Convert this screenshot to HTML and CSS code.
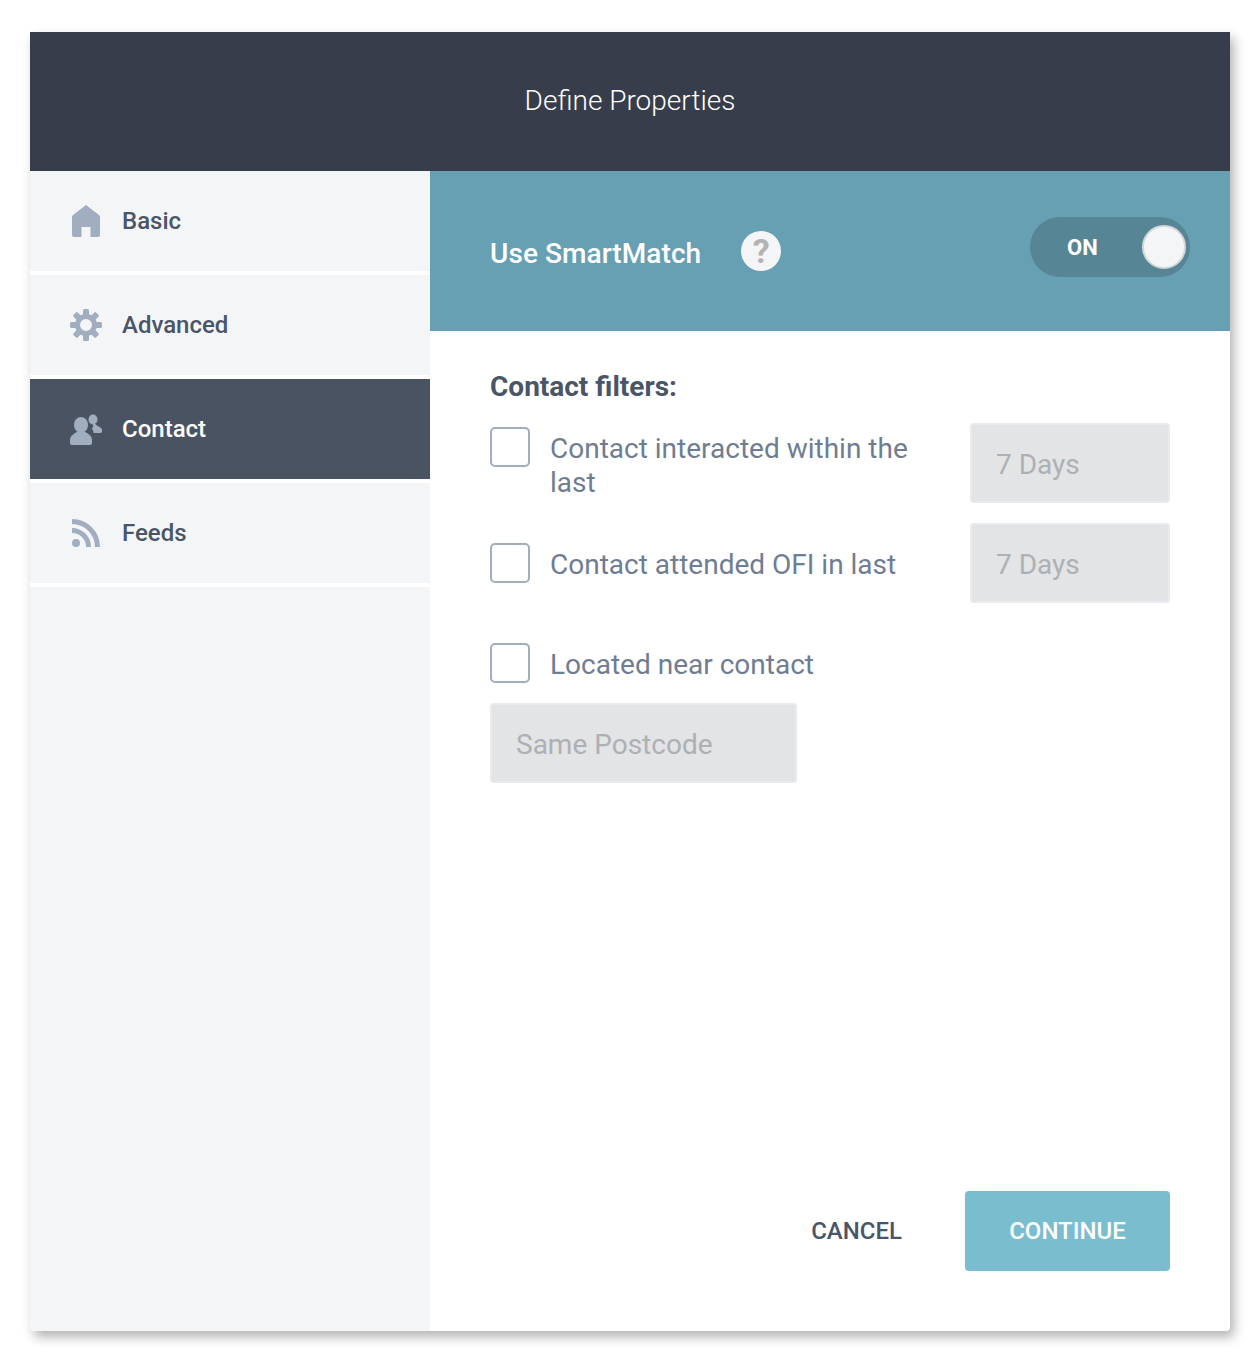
FILE: index.html

```html
<!DOCTYPE html>
<html lang="en">
<head>
  <meta charset="UTF-8" />
  <title>Define Properties</title>
  <link rel="stylesheet" href="styles.css">
</head>
<body>
  <div class="modal">
    <div class="modal-header">Define Properties</div>
    <div class="modal-body">
      <div class="sidebar">
        <div class="nav-item">
          <svg class="nav-icon" viewBox="0 0 32 32"><path d="M16 0 L29 10 Q30 11 30 12 V30 Q30 32 28 32 H20.500 V22 H11.500 V32 H4 Q2 32 2 30 V12 Q2 11 3 10 Z"/></svg>
          Basic
        </div>
        <div class="nav-item">
          <svg class="nav-icon" viewBox="0 0 32 32">
            <circle class="gear-ring" cx="16" cy="16" r="8.500"/>
            <rect x="13" y="0" width="6" height="7" rx="1.500"/>
            <rect x="13" y="0" width="6" height="7" rx="1.500" transform="rotate(45 16 16)"/>
            <rect x="13" y="0" width="6" height="7" rx="1.500" transform="rotate(90 16 16)"/>
            <rect x="13" y="0" width="6" height="7" rx="1.500" transform="rotate(135 16 16)"/>
            <rect x="13" y="0" width="6" height="7" rx="1.500" transform="rotate(180 16 16)"/>
            <rect x="13" y="0" width="6" height="7" rx="1.500" transform="rotate(225 16 16)"/>
            <rect x="13" y="0" width="6" height="7" rx="1.500" transform="rotate(270 16 16)"/>
            <rect x="13" y="0" width="6" height="7" rx="1.500" transform="rotate(315 16 16)"/>
          </svg>
          Advanced
        </div>
        <div class="nav-item active">
          <svg class="nav-icon" viewBox="0 0 32 32">
            <ellipse cx="11" cy="12" rx="7" ry="8"/>
            <path d="M0 30 V27 C0 23 4 20.500 7 19 H15 C18 20.500 22 23 22 27 V30 Q22 32 20 32 H2 Q0 32 0 30 Z"/>
            <ellipse cx="23" cy="6.500" rx="4.500" ry="5"/>
            <path d="M23 11 H25.500 C26 13 32 14 32 17 V18.500 Q32 20 30 20 H23.500 C23.500 18 23 17 21.800 15.800 C23 14.500 23.500 13 23 11 Z"/>
          </svg>
          Contact
        </div>
        <div class="nav-item">
          <svg class="nav-icon" viewBox="0 0 32 32">
            <circle cx="6" cy="26" r="4"/>
            <path class="rss-arc" d="M2 13.500 A16.500 16.500 0 0 1 18.500 30"/>
            <path class="rss-arc" d="M2 4.500 A25.500 25.500 0 0 1 27.500 30"/>
          </svg>
          Feeds
        </div>
      </div>
      <div class="content">
        <div class="smartmatch">
          <span class="smartmatch-label">Use SmartMatch</span>
          <span class="help-badge">?</span>
          <div class="toggle"><span class="toggle-text">ON</span><span class="toggle-knob"></span></div>
        </div>
        <div class="filters">
          <h3 class="filters-title">Contact filters:</h3>
          <div class="filter-row first">
            <span class="checkbox"></span>
            <span class="filter-label">Contact interacted within the last</span>
            <div class="select-box">7 Days</div>
          </div>
          <div class="filter-row">
            <span class="checkbox"></span>
            <span class="filter-label">Contact attended OFI in last</span>
            <div class="select-box">7 Days</div>
          </div>
          <div class="filter-row near">
            <span class="checkbox"></span>
            <span class="filter-label">Located near contact</span>
          </div>
          <div class="select-box wide">Same Postcode</div>
        </div>
        <div class="actions">
          <button class="btn-cancel">CANCEL</button>
          <button class="btn-continue">CONTINUE</button>
        </div>
      </div>
    </div>
  </div>
</body>
</html>
```

FILE: styles.css

```css
* {
  box-sizing: border-box;
}
body {
  margin: 0;
  padding: 32px 30px 33px;
  background: #fff;
  font-family: Roboto, sans-serif;
}
.modal {
  width: 1200px;
  height: 1299px;
  display: flex;
  flex-direction: column;
  overflow: hidden;
  border-radius: 0 0 4px 4px;
  background: #fff;
  box-shadow: 4px 6px 12px rgba(0, 0, 0, 0.3);
}
.modal-header {
  height: 139px;
  padding-bottom: 3px;
  display: flex;
  align-items: center;
  justify-content: center;
  background: #373d4a;
  color: #fff;
  font-size: 28px;
  font-weight: 300;
}
.modal-body {
  flex: 1;
  display: flex;
}
.sidebar {
  width: 400px;
  background: #f4f5f7;
}
.nav-item {
  height: 104px;
  padding-left: 40px;
  display: flex;
  align-items: center;
  gap: 20px;
  border-bottom: 4px solid #fff;
  color: #4a5568;
  font-size: 24px;
  font-weight: 500;
}
.nav-item.active {
  background: #4a5362;
  color: #fff;
}
.nav-icon {
  width: 32px;
  height: 32px;
  fill: #a0aec0;
}
.gear-ring {
  fill: none;
  stroke: #a0aec0;
  stroke-width: 5;
}
.rss-arc {
  fill: none;
  stroke: #a0aec0;
  stroke-width: 5;
}
.content {
  flex: 1;
  display: flex;
  flex-direction: column;
}
.smartmatch {
  height: 160px;
  padding: 0 40px 0 60px;
  display: flex;
  align-items: center;
  background: #679fb3;
  color: #fff;
}
.smartmatch-label {
  margin-top: 4px;
  font-size: 28px;
  font-weight: 500;
  letter-spacing: 0.08px;
}
.help-badge {
  width: 40px;
  height: 40px;
  margin-left: 40px;
  border-radius: 50%;
  background: #f4f5f7;
  color: #b3b3b3;
  font-size: 34px;
  font-weight: 700;
  line-height: 40px;
  text-align: center;
}
.toggle {
  width: 160px;
  height: 60px;
  margin: 0 0 8px auto;
  padding: 0 4px 0 37px;
  display: flex;
  align-items: center;
  justify-content: space-between;
  border-radius: 30px;
  background: #568696;
}
.toggle-text {
  font-size: 22px;
  font-weight: 700;
}
.toggle-knob {
  width: 44px;
  height: 44px;
  border-radius: 50%;
  border: 2px solid #d4d6d8;
  background: #f4f5f7;
}
.filters {
  flex: 1;
  padding: 40px 60px 0;
}
.filters-title {
  margin: 0 0 20px;
  color: #4a5568;
  font-size: 28px;
  font-weight: 700;
  line-height: 32px;
}
.filter-row {
  display: flex;
  align-items: center;
  margin-bottom: 20px;
  min-height: 80px;
}
.filter-row.first {
  align-items: flex-start;
}
.filter-row.near {
  min-height: 40px;
  margin-top: 40px;
}
.checkbox {
  flex: none;
  width: 40px;
  height: 40px;
  border: 2px solid #a0aec0;
  border-radius: 5px;
  background: #fff;
}
.first .checkbox {
  margin-top: 4px;
}
.filter-label {
  width: 380px;
  margin: 0 40px 0 20px;
  padding-top: 3px;
  color: #6f7d92;
  font-size: 28px;
  line-height: 34px;
}
.first .filter-label {
  margin-top: 6px;
}
.select-box {
  width: 200px;
  height: 80px;
  padding: 2px 0 0 24px;
  display: flex;
  align-items: center;
  border: 2px solid #e8eaed;
  border-radius: 4px;
  background: #e2e4e6;
  color: #adb0b5;
  font-size: 28px;
}
.select-box.wide {
  width: 307px;
}
.actions {
  padding: 0 60px 60px;
  display: flex;
  justify-content: flex-end;
  align-items: center;
  gap: 63px;
}
.btn-cancel, .btn-continue {
  border: none;
  font-family: Roboto, sans-serif;
  font-size: 24px;
  font-weight: 500;
  cursor: pointer;
}
.btn-cancel {
  padding: 0;
  background: none;
  color: #4a5568;
}
.btn-continue {
  width: 205px;
  height: 80px;
  border-radius: 4px;
  background: #79bdcf;
  color: #fff;
}
```
